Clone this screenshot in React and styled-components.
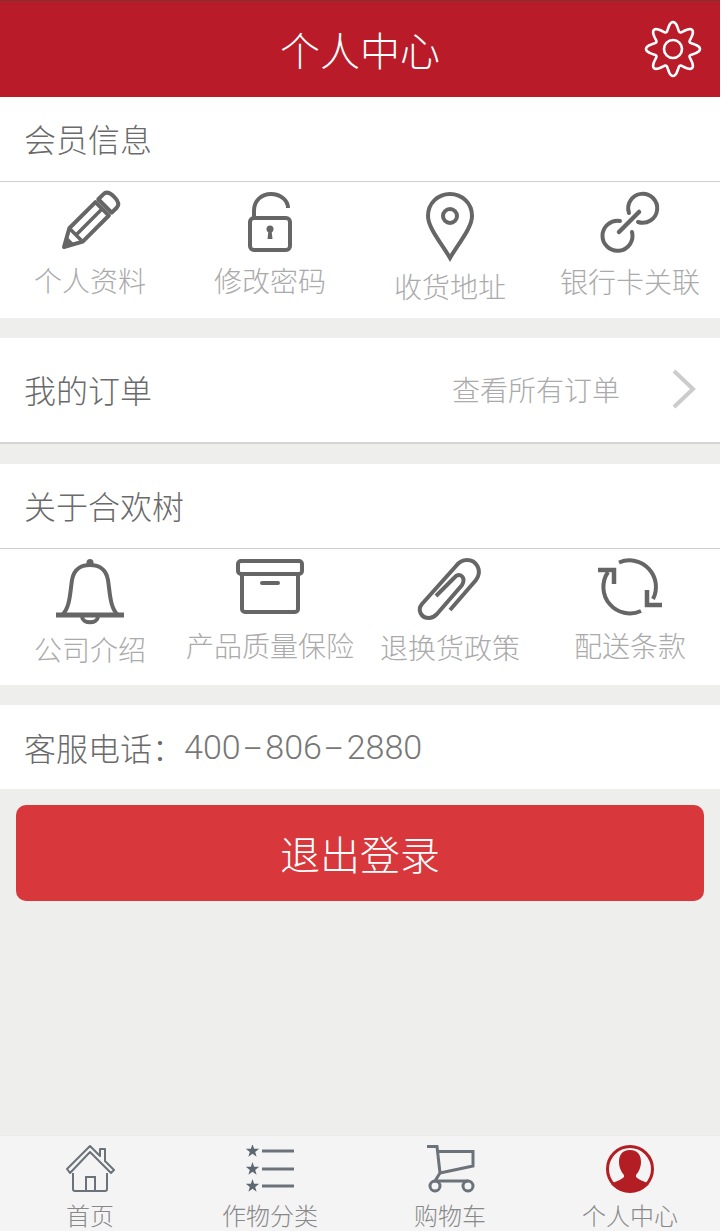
import React from "react";
import styled, { createGlobalStyle } from "styled-components";

const CJK = `"Noto Sans CJK SC", "Noto Sans", sans-serif`;

//#region styled components
const GlobalStyle = createGlobalStyle`
  html, body { margin: 0; padding: 0; background: #fff; }
  * { box-sizing: border-box; }
`;
const Page = styled.div`
  display: flex;
  flex-direction: column;
  width: 720px;
  min-height: 1231px;
  background: #eeeeec;
  font-family: ${CJK};
  font-weight: 300;
`;
const Header = styled.header`
  display: grid;
  grid-template-columns: 1fr auto 1fr;
  align-items: center;
  height: 97px;
  padding: 0 18px;
  background: linear-gradient(#8c2a2e 0, #b01f2a 2px, #b91b28 6px);
`;
const HeaderTitle = styled.h1`
  grid-column: 2;
  margin: 0;
  font-size: 40px;
  font-weight: 300;
  line-height: 1;
  color: #fff;
`;
const Gear = styled.svg`
  grid-column: 3;
  justify-self: end;
  display: block;
  width: 58px;
  height: 58px;
  fill: none;
  stroke: #fff;
  stroke-width: 2.6;
`;
const Section = styled.section`
  background: #fff;
  margin-bottom: 20px;
`;
const TitleRow = styled.div`
  display: flex;
  align-items: center;
  justify-content: space-between;
  height: ${props => props.height || 84}px;
  padding: 0 24px 3px;
  font-size: 32px;
  color: #6a6a6a;
  border-bottom: ${props => props.rule || 0}px solid #d4d4d4;
`;
const Divider = styled.div`
  height: 1px;
  background: #cfcfcf;
`;
const MoreLink = styled.div`
  display: flex;
  align-items: center;
  gap: 52px;
  font-size: 28px;
  color: #aaa;
`;
const Chevron = styled.svg`
  display: block;
  width: 24px;
  height: 40px;
  fill: none;
  stroke: #ccc;
  stroke-width: 4;
`;
const IconGrid = styled.div`
  display: grid;
  grid-template-columns: repeat(4, 1fr);
  height: 136px;
  padding-top: ${props => props.top}px;
`;
const IconCell = styled.div`
  display: flex;
  flex-direction: column;
  align-items: center;
`;
const Glyph = styled.svg`
  display: block;
  width: 80px;
  overflow: visible;
  fill: none;
  stroke: #666;
  stroke-width: 4;
`;
const CellLabel = styled.span`
  font-size: 28px;
  line-height: 40px;
  color: #aaa;
  white-space: nowrap;
`;
const PhoneRow = styled.div`
  display: flex;
  align-items: center;
  height: 84px;
  padding: 0 24px 1px;
  background: #fff;
  font-size: 32px;
  color: #6a6a6a;
`;
const PhoneNumber = styled.span`
  font-family: Roboto, "Liberation Sans", sans-serif;
  font-size: 34px;
  font-weight: 300;
  color: #777;
`;
const Dash = styled.span`
  display: inline-block;
  margin: 0 7.5px;
  transform: scaleX(1.9);
`;
const LogoutButton = styled.button`
  display: block;
  height: 96px;
  margin: 16px 16px 0;
  border: 0;
  border-radius: 10px;
  background: #d8373c;
  font-family: ${CJK};
  font-size: 40px;
  font-weight: 300;
  color: #fff;
`;
const BottomNav = styled.nav`
  display: grid;
  grid-template-columns: repeat(4, 1fr);
  height: 96px;
  margin-top: auto;
  padding-top: 9px;
  background: #f4f4f5;
  border-top: 1px solid #e9e9e9;
`;
const NavItem = styled.div`
  display: flex;
  flex-direction: column;
  align-items: center;
`;
const NavGlyph = styled.svg`
  display: block;
  width: 60px;
  height: 55px;
  fill: none;
  stroke: #6c727a;
  stroke-width: ${props => props.weight || 2};
`;
const NavLabel = styled.span`
  font-size: 24px;
  line-height: 30px;
  color: #888;
`;
//#endregion

const gearPath = () => {
  const pts = [];
  for (let i = 0; i < 160; i++) {
    const a = (i / 160) * Math.PI * 2;
    const r = 22.5 + 4.5 * Math.cos(8 * a);
    pts.push(`${(29 + r * Math.sin(a)).toFixed(2)} ${(29 - r * Math.cos(a)).toFixed(2)}`);
  }
  return "M" + pts.join("L") + "Z";
};

const Pencil = () => (
  <g transform="translate(14 55) rotate(-45)">
    <path d="M0 0L17 -9.5H54V9.5H17Z" strokeLinejoin="round" />
    <path d="M17 -9.5V9.5M17 0H54" strokeWidth="3.5" />
    <path d="M0 0L9 -5V5Z" fill="#666" strokeWidth="1" />
    <path d="M58 -9.5H65Q71 -9.5 71 0Q71 9.5 65 9.5H58Z" strokeLinejoin="round" />
  </g>
);
const Lock = () => (
  <>
    <rect x="20" y="26" width="40" height="32" rx="4" />
    <path d="M24 26V19C24 8 32 2 41 2C50 2 58 8 58 16" />
    <circle cx="40" cy="37" r="3.5" fill="#666" stroke="none" />
    <path d="M38.5 38H41.5L42.5 47H37.5Z" fill="#666" stroke="none" />
  </>
);
const Pin = () => (
  <>
    <path d="M40 66C32 52 18 36 18 24C18 11 28 2 40 2C52 2 62 11 62 24C62 36 48 52 40 66Z" />
    <circle cx="40" cy="24" r="7" />
  </>
);
const Chain = () => (
  <g strokeLinecap="round">
    <path d="M39 21A14.5 14.5 0 1 1 48 30" />
    <path d="M30 29A15 15 0 1 0 42 40" />
    <path d="M29 40L49 20" strokeWidth="4.5" />
  </g>
);
const Bell = () => (
  <>
    <path d="M12 57C20 50 20 35 22 22C24 10 33 7 40 7C47 7 56 10 58 22C60 35 60 50 68 57" />
    <circle cx="40" cy="4.5" r="3.5" fill="#666" stroke="none" />
    <path d="M6 57H74" strokeWidth="5" />
    <path d="M32 59C33 66 47 66 48 59" />
  </>
);
const Box = () => (
  <>
    <rect x="8" y="3" width="64" height="13" rx="3" />
    <path d="M12 16V51A3 3 0 0 0 15 54H65A3 3 0 0 0 68 51V16" />
    <path d="M32 25H48" strokeLinecap="round" />
  </>
);
const Clip = () => (
  <path d="M40 52L66 22C73 12 66 2 57 2C52 2 49 4 46 8L12 46C7 52 11 60 19 60C23 60 25 58 27 56L52 27C56 20 51 15 46 18C45 19 44 20 43 21L26 38" />
);
const Refresh = () => (
  <>
    <path d="M29 4.5A26.5 26.5 0 0 1 63 41" />
    <path d="M18 14A26.5 26.5 0 0 0 51 53" />
    <path d="M8 12H24V26" strokeWidth="4.5" />
    <path d="M57 32V47H72" strokeWidth="4.5" />
  </>
);

const memberItems = [
  { label: "个人资料", height: 68, icon: <Pencil /> },
  { label: "修改密码", height: 68, icon: <Lock /> },
  { label: "收货地址", height: 74, icon: <Pin /> },
  { label: "银行卡关联", height: 69, icon: <Chain /> }
];
const aboutItems = [
  { label: "公司介绍", height: 71, icon: <Bell /> },
  { label: "产品质量保险", height: 67, icon: <Box /> },
  { label: "退换货政策", height: 69, icon: <Clip /> },
  { label: "配送条款", height: 67, icon: <Refresh /> }
];

const star = (cy) => {
  const pts = [];
  for (let i = 0; i < 10; i++) {
    const a = (i / 10) * Math.PI * 2;
    const r = i % 2 ? 2.8 : 7;
    pts.push(`${(12.5 + r * Math.sin(a)).toFixed(1)},${(cy - r * Math.cos(a)).toFixed(1)}`);
  }
  return pts.join(" ");
};

const navItems = [
  {
    label: "首页",
    icon: (
      <NavGlyph viewBox="0 0 60 55">
        <path d="M7 24L30 1L40 11V4H45V16L54 25L51 28L30 7L10 28Z" strokeLinejoin="round" />
        <path d="M13 28V44A2 2 0 0 0 15 46H45A2 2 0 0 0 47 44V28" />
        <path d="M26 46V32H35V46" />
      </NavGlyph>
    )
  },
  {
    label: "作物分类",
    icon: (
      <NavGlyph viewBox="0 0 60 55" weight={3}>
        {[6, 24, 41].map(y => (
          <g key={y}>
            <polygon points={star(y)} fill="#5e6670" stroke="none" />
            <path d={`M22 ${y}H54`} />
          </g>
        ))}
      </NavGlyph>
    )
  },
  {
    label: "购物车",
    icon: (
      <NavGlyph viewBox="0 0 60 55" weight={3}>
        <path d="M7 1.5H17L20 28L15 36H48" />
        <path d="M18 6.5H53V21L20 28" />
        <circle cx="15" cy="41" r="5" />
        <circle cx="48" cy="41" r="5" />
      </NavGlyph>
    )
  },
  {
    label: "个人中心",
    icon: (
      <NavGlyph viewBox="0 0 60 55" weight={3}>
        <circle cx="30" cy="24" r="22.5" stroke="#b21e23" />
        <path
          d="M30 5C38 5 41 10 41 17C41 23 38 28 36 30V32C40 36 47 37 49 39C44 44 38 46 30 46C22 46 16 44 11 39C13 37 20 36 24 32V30C22 28 19 23 19 17C19 10 22 5 30 5Z"
          fill="#b21e23"
          stroke="none"
        />
      </NavGlyph>
    )
  }
];

const renderCells = items =>
  items.map(item => (
    <IconCell key={item.label}>
      <Glyph height={item.height} viewBox={`0 0 80 ${item.height}`}>
        {item.icon}
      </Glyph>
      <CellLabel>{item.label}</CellLabel>
    </IconCell>
  ));

export default function App() {
  return (
    <Page>
      <GlobalStyle />
      <Header>
        <HeaderTitle>个人中心</HeaderTitle>
        <Gear viewBox="0 0 58 58">
          <path d={gearPath()} />
          <circle cx="29" cy="29" r="9" />
        </Gear>
      </Header>

      <Section>
        <TitleRow>会员信息</TitleRow>
        <Divider />
        <IconGrid top={10}>{renderCells(memberItems)}</IconGrid>
      </Section>

      <Section>
        <TitleRow height={106} rule={2}>
          我的订单
          <MoreLink>
            查看所有订单
            <Chevron viewBox="0 0 24 40">
              <path d="M2 2L21 20L2 38" />
            </Chevron>
          </MoreLink>
        </TitleRow>
      </Section>

      <Section>
        <TitleRow>关于合欢树</TitleRow>
        <Divider />
        <IconGrid top={9}>{renderCells(aboutItems)}</IconGrid>
      </Section>

      <PhoneRow>
        客服电话：
        <PhoneNumber>
          400<Dash>-</Dash>806<Dash>-</Dash>2880
        </PhoneNumber>
      </PhoneRow>

      <LogoutButton>退出登录</LogoutButton>

      <BottomNav>
        {navItems.map(item => (
          <NavItem key={item.label}>
            {item.icon}
            <NavLabel>{item.label}</NavLabel>
          </NavItem>
        ))}
      </BottomNav>
    </Page>
  );
}
